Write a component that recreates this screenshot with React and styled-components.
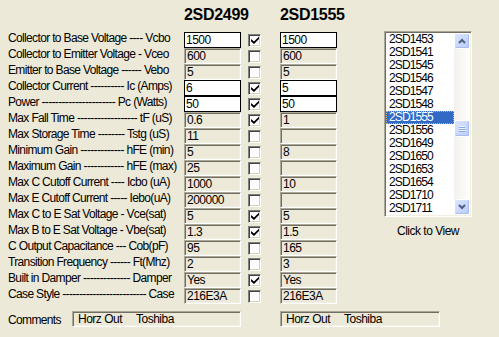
import React from "react";
import styled, { createGlobalStyle, css } from "styled-components";

const Global = createGlobalStyle`
  html, body { margin: 0; padding: 0; background: #ECE9D8; }
  body { font-family: "Liberation Sans", Arial, sans-serif; }
`;

const Window = styled.div`
  width: 499px;
  height: 337px;
  background: #ECE9D8;
  display: flex;
  flex-direction: column;
  font-family: "Liberation Sans", Arial, sans-serif;
  font-size: 12px;
  letter-spacing: -0.5px;
  color: #000;
  overflow: hidden;
`;

const Top = styled.div`
  display: flex;
  align-items: flex-start;
`;

const Specs = styled.div`
  margin-left: 8px;
  display: grid;
  grid-template-columns: 176px 57px 39px 57px;
  grid-template-rows: 32px;
  grid-auto-rows: 16px;
`;

const Heading = styled.div`
  grid-column: ${(p) => p.$col};
  padding-top: 6px;
  font-size: 16px;
  line-height: 18px;
  font-weight: bold;
  letter-spacing: -0.3px;
  white-space: nowrap;
`;

const Label = styled.div`
  grid-column: 1;
  line-height: 12px;
  letter-spacing: -0.65px;
  white-space: nowrap;
`;

const sunken = css`
  background: #ECE9D8;
  border-top: 1px solid #ACA899;
  border-left: 1px solid #ACA899;
  border-right: 1px solid #fff;
  border-bottom: 1px solid #fff;
  box-shadow: inset 1px 1px 0 #716F64, inset -1px -1px 0 #F1EFE2;
`;

const Field = styled.div`
  box-sizing: border-box;
  height: 16px;
  line-height: 14px;
  padding-left: ${(p) => (p.$edit ? "1px" : "2px")};
  white-space: nowrap;
  overflow: hidden;
  ${(p) =>
    p.$edit
      ? css`
          background: #fff;
          border: 1px solid #000;
        `
      : sunken}
`;

const CheckCell = styled.div`
  display: flex;
  align-items: center;
  padding-left: 7px;
`;

const Box = styled.div`
  box-sizing: border-box;
  width: 13px;
  height: 13px;
  background: #fff;
  border-top: 1px solid #808080;
  border-left: 1px solid #808080;
  border-right: 1px solid #fff;
  border-bottom: 1px solid #fff;
  box-shadow: inset 1px 1px 0 #404040, inset -1px -1px 0 #D4D0C8;
  display: flex;
  align-items: center;
  justify-content: center;
`;

const Picker = styled.div`
  margin-left: 47px;
  margin-top: 31px;
  display: flex;
  flex-direction: column;
  align-items: center;
  width: 88px;
`;

const ListBox = styled.div`
  box-sizing: border-box;
  width: 88px;
  height: 186px;
  background: #fff;
  border-top: 1px solid #ACA899;
  border-left: 1px solid #ACA899;
  border-right: 1px solid #fff;
  border-bottom: 1px solid #fff;
  box-shadow: inset 1px 1px 0 #716F64, inset -1px -1px 0 #F1EFE2;
  padding: 1px;
  display: flex;
`;

const Items = styled.div`
  flex: 1;
  overflow: hidden;
`;

const Item = styled.div`
  box-sizing: border-box;
  height: 13px;
  line-height: 13px;
  padding-left: 3px;
  font-size: 12px;
  letter-spacing: -0.9px;
  white-space: nowrap;
  ${(p) =>
    p.$selected &&
    css`
      background: #316AC5;
      color: #fff;
      outline: 1px dotted #E0B070;
      outline-offset: -1px;
    `}
`;

const ScrollBar = styled.div`
  width: 16px;
  display: flex;
  flex-direction: column;
  background: linear-gradient(to right, #F3F1EC, #FEFEFB);
`;

const SBButton = styled.div`
  box-sizing: border-box;
  width: 16px;
  height: 16px;
  border: 1px solid #fff;
  border-radius: 2px;
  background: linear-gradient(135deg, #DCE6FD, #B9CCF8);
  box-shadow: inset -1px -1px 0 #A7BDF0;
  display: flex;
  align-items: center;
  justify-content: center;
`;

const Track = styled.div`
  flex: 1;
  display: flex;
  flex-direction: column;
`;

const Thumb = styled(SBButton)`
  height: 17px;
  margin-top: ${(p) => p.$offset}px;
  flex-direction: column;
  gap: 1px;
`;

const Grip = styled.div`
  width: 6px;
  height: 1px;
  background: #EEF3FF;
  box-shadow: 0 1px 0 #8CA6E0;
`;

const Caption = styled.div`
  margin-top: 7px;
  line-height: 14px;
  white-space: nowrap;
`;

const Bottom = styled.div`
  margin-top: 7px;
  margin-left: 8px;
  display: grid;
  grid-template-columns: 64px 169px 39px 160px;
  grid-template-rows: 16px;
  align-items: start;
`;

const CommentLabel = styled.div`
  line-height: 12px;
  padding-top: 3px;
  letter-spacing: -0.65px;
`;

const CommentBox = styled.div`
  grid-column: ${(p) => p.$col};
  box-sizing: border-box;
  height: 16px;
  line-height: 14px;
  padding-left: 5px;
  white-space: pre;
  ${sunken}
`;

const rows = [
  ["Collector to Base Voltage ---- Vcbo", "1500", "1500", true, true],
  ["Collector to Emitter Voltage - Vceo", "600", "600", false, false],
  ["Emitter to Base Voltage ------ Vebo", "5", "5", false, false],
  ["Collector Current ---------- Ic (Amps)", "6", "5", true, true],
  ["Power ---------------------- Pc (Watts)", "50", "50", true, true],
  ["Max Fall Time ------------------ tF (uS)", "0.6", "1", true, false],
  ["Max Storage Time -------- Tstg (uS)", "11", "", false, false],
  ["Minimum Gain ------------- hFE (min)", "5", "8", false, false],
  ["Maximum Gain ------------ hFE (max)", "25", "", false, false],
  ["Max C Cutoff Current ---- Icbo (uA)", "1000", "10", false, false],
  ["Max E Cutoff Current ----- Iebo(uA)", "200000", "", false, false],
  ["Max C to E Sat Voltage - Vce(sat)", "5", "5", true, false],
  ["Max B to E Sat Voltage - Vbe(sat)", "1.3", "1.5", true, false],
  ["C Output Capacitance --- Cob(pF)", "95", "165", false, false],
  ["Transition Frequency ------ Ft(Mhz)", "2", "3", false, false],
  ["Built in Damper -------------- Damper", "Yes", "Yes", true, false],
  ["Case Style ------------------------- Case", "216E3A", "216E3A", false, false],
];

const parts = [
  "2SD1453", "2SD1541", "2SD1545", "2SD1546", "2SD1547", "2SD1548", "2SD1555",
  "2SD1556", "2SD1649", "2SD1650", "2SD1653", "2SD1654", "2SD1710", "2SD1711",
];

const Check = () => (
  <svg width="8" height="8" viewBox="0 0 8 8">
    <path d="M0 3 L3 5.5 L8 0.5 L8 3 L3 8 L0 5.5 Z" fill="#000" />
  </svg>
);

const Chevron = ({ up }) => (
  <svg width="8" height="6" viewBox="0 0 8 6">
    <path
      d={up ? "M1 5 L4 2 L7 5" : "M1 1 L4 4 L7 1"}
      fill="none"
      stroke="#4D6185"
      strokeWidth="2"
    />
  </svg>
);

export default function App() {
  return (
    <>
      <Global />
      <Window>
        <Top>
          <Specs>
            <Heading $col={2}>2SD2499</Heading>
            <Heading $col={4}>2SD1555</Heading>
            {rows.map(([label, a, b, checked, edit]) => (
              <React.Fragment key={label}>
                <Label>{label}</Label>
                <Field $edit={edit}>{a}</Field>
                <CheckCell>
                  <Box>{checked && <Check />}</Box>
                </CheckCell>
                <Field $edit={edit}>{b}</Field>
              </React.Fragment>
            ))}
          </Specs>
          <Picker>
            <ListBox>
              <Items>
                {parts.map((p) => (
                  <Item key={p} $selected={p === "2SD1555"}>
                    {p}
                  </Item>
                ))}
              </Items>
              <ScrollBar>
                <SBButton>
                  <Chevron up />
                </SBButton>
                <Track>
                  <Thumb $offset={71}>
                    <Grip />
                    <Grip />
                    <Grip />
                  </Thumb>
                </Track>
                <SBButton>
                  <Chevron />
                </SBButton>
              </ScrollBar>
            </ListBox>
            <Caption>Click to View</Caption>
          </Picker>
        </Top>
        <Bottom>
          <CommentLabel>Comments</CommentLabel>
          <CommentBox $col={2}>{"Horz Out     Toshiba"}</CommentBox>
          <CommentBox $col={4}>{"Horz Out     Toshiba"}</CommentBox>
        </Bottom>
      </Window>
    </>
  );
}
